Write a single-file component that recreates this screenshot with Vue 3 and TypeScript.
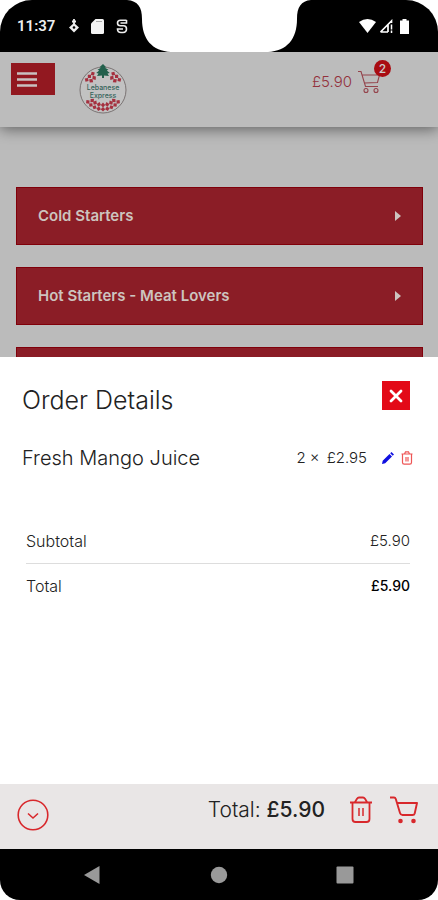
<script setup lang="ts">
import { computed, ref } from 'vue'

interface OrderLine {
  name: string
  quantity: number
  price: number
}

const categories: string[] = ['Cold Starters', 'Hot Starters - Meat Lovers', '']
const lines = ref<OrderLine[]>([{ name: 'Fresh Mango Juice', quantity: 2, price: 2.95 }])

const money = (value: number): string => `£${value.toFixed(2)}`
const total = computed(() => lines.value.reduce((sum, l) => sum + l.quantity * l.price, 0))
const count = computed(() => lines.value.reduce((sum, l) => sum + l.quantity, 0))

// Angles of the leaves round the edge of the logo
const outerLeaves: number[] = [-52, -39, -26, -13, 0, 13, 26, 39, 52, 122, 135, 148, -122, -135, -148]
const innerLeaves: number[] = [-46, -32, -16, 0, 16, 32, 46, 128, 144, -128, -144]

function removeLine(index: number): void {
  lines.value.splice(index, 1)
}
</script>

<template>
  <div class="phone">
    <div class="status">
      <div class="status-left">
        <span class="clock">11:37</span>
        <svg width="10" height="14" viewBox="0 0 10 14">
          <path d="M5 0v5M3 2.500h4" fill="none" stroke="#eee" stroke-width="1.800" />
          <path d="M5 4L10 8.500 5 13.500 0 8.500z" fill="#eee" />
          <circle cx="5" cy="8.500" r="1.300" fill="#000" />
        </svg>
        <svg width="13" height="15" viewBox="0 0 13 15">
          <path d="M4.500 0H11.500Q13 0 13 1.500V13.500Q13 15 11.500 15H1.500Q0 15 0 13.500V4.500z" fill="#f4f4f4" />
          <path d="M5 2.500h6" stroke="#aaa" stroke-width="1" />
        </svg>
        <svg width="12" height="15" viewBox="0 0 12 15">
          <path d="M10.500 1.200H4.500Q1.500 1.200 1.500 4T4.500 6.800H7.500Q10.500 6.800 10.500 10T7 13.500H5Q1.500 13.500 1.500 10H7M4.500 4H10.500V1" fill="none" stroke="#eee" stroke-width="1.600" />
        </svg>
      </div>
      <svg class="notch" width="184" height="52" viewBox="0 0 184 52">
        <path d="M0 0C11 1 15 7 15 19C15 39 25 51 44 52H141C160 51 170 39 170 19C170 7 174 1 184 0z" fill="#fff" />
      </svg>
      <div class="status-right">
        <svg width="17" height="14" viewBox="0 0 17 14">
          <path d="M0 3Q8.500-3 17 3L8.500 14z" fill="#fff" />
        </svg>
        <svg width="14" height="14" viewBox="0 0 14 14">
          <path d="M1.500 13L12.500 2V4M1.500 13H9M9 6V13" fill="none" stroke="#fff" stroke-width="1.700" />
          <path d="M12.500 5.500v5M12.500 11.500V14" stroke="#fff" stroke-width="1.500" />
        </svg>
        <svg width="9" height="15" viewBox="0 0 9 15">
          <path d="M2.500 0h4v1.500H9V15H0V1.500h2.500z" fill="#fff" />
        </svg>
      </div>
    </div>

    <header class="header">
      <button class="menu" type="button" aria-label="Menu">
        <svg width="20" height="15" viewBox="0 0 20 15">
          <path d="M0 1.500h20M0 7.500h20M0 13.500h20" stroke="#c9c0c0" stroke-width="2.400" />
        </svg>
      </button>
      <a class="logo" href="#">
        <svg width="48" height="50" viewBox="0 0 48 50" aria-label="Lebanese Express">
          <circle cx="24" cy="26" r="23" fill="#c2c2c2" stroke="#68605f" stroke-width=".8" />
          <g fill="#a5303f">
            <path v-for="a in outerLeaves" :key="`o${a}`" :transform="`rotate(${a} 24 26)`" d="M24 47.500l-2.300-2.300L24 43l2.300 2.200z" />
            <path v-for="a in innerLeaves" :key="`i${a}`" :transform="`rotate(${a} 24 26)`" d="M24 43.500l-2.200-2.400L24 38.500l2.200 2.600z" />
          </g>
          <path d="M24 0l3 3-1 .8 3.500 2-1.700.7 3 2.500-2.300.4 1.500 2.600L25 11.500V14h-2v-2.500L18 12l1.500-2.500-2.300-.5 3-2.500-1.700-.7 3.300-2-1-.8z" fill="#22604c" />
          <text class="logo-text" x="24" y="26" text-anchor="middle">Lebanese</text>
          <text class="logo-text" x="24" y="34" text-anchor="middle">Express</text>
        </svg>
      </a>
      <a class="basket" href="#">
        <span>{{ money(total) }}</span>
        <span class="basket-icon">
          <svg width="24" height="24" viewBox="0 0 24 24" fill="none" stroke="#94434b" stroke-width="1.100">
            <path d="M1 1.500h3l4.500 15H21M5 5h17.500l-2 7.500-13 .5" />
            <circle cx="9" cy="20.500" r="2" />
            <circle cx="19" cy="20.500" r="2" />
          </svg>
          <span class="badge">{{ count }}</span>
        </span>
      </a>
    </header>

    <main class="menu-list">
      <button v-for="category in categories" :key="category" class="category" type="button">
        <span>{{ category }}</span>
        <svg width="6" height="10" viewBox="0 0 6 10"><path d="M0 0l6 5-6 5z" fill="#cdc4bf" /></svg>
      </button>
    </main>

    <section class="sheet">
      <div class="sheet-head">
        <h2>Order Details</h2>
        <button class="close" type="button" aria-label="Close">
          <svg width="14" height="14" viewBox="0 0 14 14">
            <path d="M2 2l10 10M12 2L2 12" stroke="#fff" stroke-width="2.800" stroke-linecap="round" />
          </svg>
        </button>
      </div>

      <ul class="lines">
        <li v-for="(line, i) in lines" :key="line.name">
          <span class="line-name">{{ line.name }}</span>
          <span class="line-qty">{{ line.quantity }} ×</span>
          <span class="line-price">{{ money(line.price) }}</span>
          <button class="icon" type="button" aria-label="Edit">
            <svg width="12" height="12" viewBox="0 0 12 12">
              <path d="M0 12l.7-3.200L7.500 2 10 4.500 3.200 11.300zM8.200 1.300L9.500 0 12 2.500l-1.300 1.300z" fill="#1010e0" />
            </svg>
          </button>
          <button class="icon" type="button" aria-label="Remove" @click="removeLine(i)">
            <svg width="12" height="14" viewBox="0 0 12 14" fill="none" stroke="#ee5555" stroke-width="1.200">
              <path d="M.5 3h11M3.500 3L4.500 .8h3L8.500 3M1.500 3v8.500q0 1.700 1.700 1.700h5.600q1.700 0 1.700-1.700V3M5 6v4.500M7 6v4.500" />
            </svg>
          </button>
        </li>
      </ul>

      <dl class="sums">
        <div>
          <dt>Subtotal</dt>
          <dd>{{ money(total) }}</dd>
        </div>
        <div>
          <dt>Total</dt>
          <dd class="strong">{{ money(total) }}</dd>
        </div>
      </dl>
    </section>

    <footer class="footer">
      <button class="icon" type="button" aria-label="Collapse">
        <svg width="32" height="32" viewBox="0 0 32 32" fill="none" stroke="#d8282c">
          <circle cx="16" cy="16" r="14.800" stroke-width="1.600" />
          <path d="M11 14.500l5 4.500 5-4.500" stroke-width="1.600" />
        </svg>
      </button>
      <p class="grand">Total: <strong>{{ money(total) }}</strong></p>
      <button class="icon" type="button" aria-label="Empty basket">
        <svg width="24" height="28" viewBox="0 0 24 28" fill="none" stroke="#d8282c" stroke-width="1.800">
          <path d="M1 6.500h22M6 6l2-3.200Q8.800 1.500 10 1.500h4q1.200 0 2 1.300L18 6M3.500 6.500V23q0 3 3 3h11q3 0 3-3V6.500" />
          <path d="M10 12v8M14 12v8" stroke-width="1.500" />
        </svg>
      </button>
      <button class="icon" type="button" aria-label="Checkout">
        <svg width="28" height="28" viewBox="0 0 28 28" fill="none" stroke="#d8282c" stroke-width="1.900">
          <path d="M0 1.500h4q1.300 0 1.800 1.500l4.200 14q.6 2 2.500 2H22.500q1.800 0 2.200-1.500L27 7H7" stroke-linejoin="round" />
          <circle cx="10.500" cy="25" r="2.300" fill="#d8282c" stroke="none" />
          <circle cx="23.500" cy="25" r="2.300" fill="#d8282c" stroke="none" />
        </svg>
      </button>
    </footer>

    <nav class="system">
      <button class="icon" type="button" aria-label="Back">
        <svg width="18" height="20" viewBox="0 0 18 20"><path d="M1 10L16.500 1v18z" fill="#999" /></svg>
      </button>
      <button class="icon" type="button" aria-label="Home">
        <svg width="18" height="18" viewBox="0 0 18 18"><circle cx="9" cy="9" r="8.200" fill="#999" /></svg>
      </button>
      <button class="icon" type="button" aria-label="Recent apps">
        <svg width="18" height="18" viewBox="0 0 18 18"><rect x=".5" y=".5" width="17" height="17" rx="1" fill="#999" /></svg>
      </button>
    </nav>
  </div>
</template>

<style>
body {
  margin: 0;
  background: #fff;
}
</style>

<style scoped>
* {
  box-sizing: border-box;
}

.phone {
  display: flex;
  flex-direction: column;
  height: 100vh;
  font-family: Inter, "Liberation Sans", sans-serif;
  color: #222;
}

button {
  font-family: inherit;
  border: 0;
  padding: 0;
  cursor: pointer;
}

svg {
  display: block;
}

a {
  color: inherit;
  text-decoration: none;
}

.icon {
  background: none;
}

.status {
  position: relative;
  z-index: 2;
  display: grid;
  grid-template-columns: minmax(0, 1fr) 184px minmax(0, 1fr);
  height: 52px;
  flex: none;
  background: #000;
  border-radius: 32px 32px 0 0;
}

.status-left,
.status-right {
  position: relative;
  display: flex;
  align-items: center;
}

.status-left svg,
.clock {
  flex: none;
}

.status-left {
  gap: 12px;
  padding-left: 17px;
}

.status-right {
  justify-content: flex-end;
  gap: 3px;
  padding-right: 29px;
}

.status-right svg:last-child {
  margin-left: 4px;
}

.clock {
  margin-right: 2px;
  font: 600 15px/20px Roboto, sans-serif;
  color: #eee;
}

.header {
  position: relative;
  z-index: 1;
  display: flex;
  align-items: flex-start;
  flex: none;
  height: 75px;
  padding: 11px 57px 0 11px;
  background: #bcbcbc;
  box-shadow: 0 2px 14px rgba(0, 0, 0, 0.5);
}

.menu {
  width: 44px;
  height: 32px;
  padding-left: 6px;
  background: #921820;
}

.logo {
  margin: 1px 0 0 24px;
}

.logo-text {
  font: 500 7px Inter, sans-serif;
  fill: #35645a;
}

.basket {
  display: flex;
  align-items: center;
  gap: 5px;
  margin: 7px 0 0 auto;
  font-size: 15px;
  line-height: 24px;
  font-weight: 300;
  color: #93323c;
}

.basket-icon {
  position: relative;
}

.badge {
  position: absolute;
  top: -10px;
  right: -10px;
  width: 17px;
  height: 17px;
  border-radius: 50%;
  background: #a90c12;
  color: #ccc;
  font-size: 12px;
  line-height: 17px;
  font-weight: 500;
  text-align: center;
}

.menu-list {
  display: flex;
  flex-direction: column;
  gap: 23px;
  flex: 1 1 0;
  min-height: 0;
  overflow: hidden;
  padding: 60px 15px 0 16px;
  background: #bbb;
}

.category {
  display: flex;
  align-items: center;
  justify-content: space-between;
  flex: none;
  height: 58px;
  margin-bottom: -1px;
  padding: 0 21px;
  border: 1px solid #80000a;
  background: #8b1d26;
  color: #cdc4bf;
  font-size: 15px;
  line-height: 20px;
  font-weight: 600;
}

.sheet {
  flex: none;
  padding: 24px 28px 176px 22px;
  background: #fff;
}

.sheet-head {
  display: flex;
  justify-content: space-between;
}

h2 {
  margin: 0;
  padding-top: 3px;
  font-size: 25px;
  line-height: 32px;
  font-weight: 300;
}

.close {
  display: grid;
  place-items: center;
  width: 28px;
  height: 29px;
  background: #e30a17;
}

.lines {
  margin: 26px 0 0;
  padding: 0;
  list-style: none;
}

.lines li {
  display: flex;
  align-items: center;
  margin-right: -3px;
  font-weight: 300;
  font-size: 15px;
  line-height: 32px;
}

.line-name {
  flex: 1;
  font-size: 20px;
}

.line-price {
  margin: 0 15px 0 7px;
}

.lines .icon + .icon {
  margin-left: 7px;
}

.sums {
  margin: 45px 0 0 4px;
}

.sums div {
  display: flex;
  justify-content: space-between;
  padding: 12px 0;
  font-size: 15px;
  line-height: 20px;
  font-weight: 300;
}

.sums div + div {
  border-top: 1px solid #ddd;
}

dt {
  font-size: 16px;
}

dd {
  margin: 0;
}

.sums .strong {
  font-size: 14px;
  font-weight: 500;
  color: #000;
}

.footer {
  display: flex;
  align-items: center;
  flex: none;
  height: 65px;
  padding: 0 20px 14px 17px;
  background: #e9e6e6;
}

.footer .icon:first-child {
  margin-top: 10px;
}

.grand {
  margin: 0 24px 0 auto;
  font-size: 21px;
  line-height: 32px;
  font-weight: 300;
}

.grand strong {
  font-weight: 500;
}

.footer .icon:last-child {
  margin-left: 17px;
}

.system {
  display: flex;
  align-items: center;
  justify-content: space-between;
  flex: none;
  height: 51px;
  padding: 0 84px 0 83px;
  background: #000;
  border-radius: 0 0 20px 20px;
}
</style>
